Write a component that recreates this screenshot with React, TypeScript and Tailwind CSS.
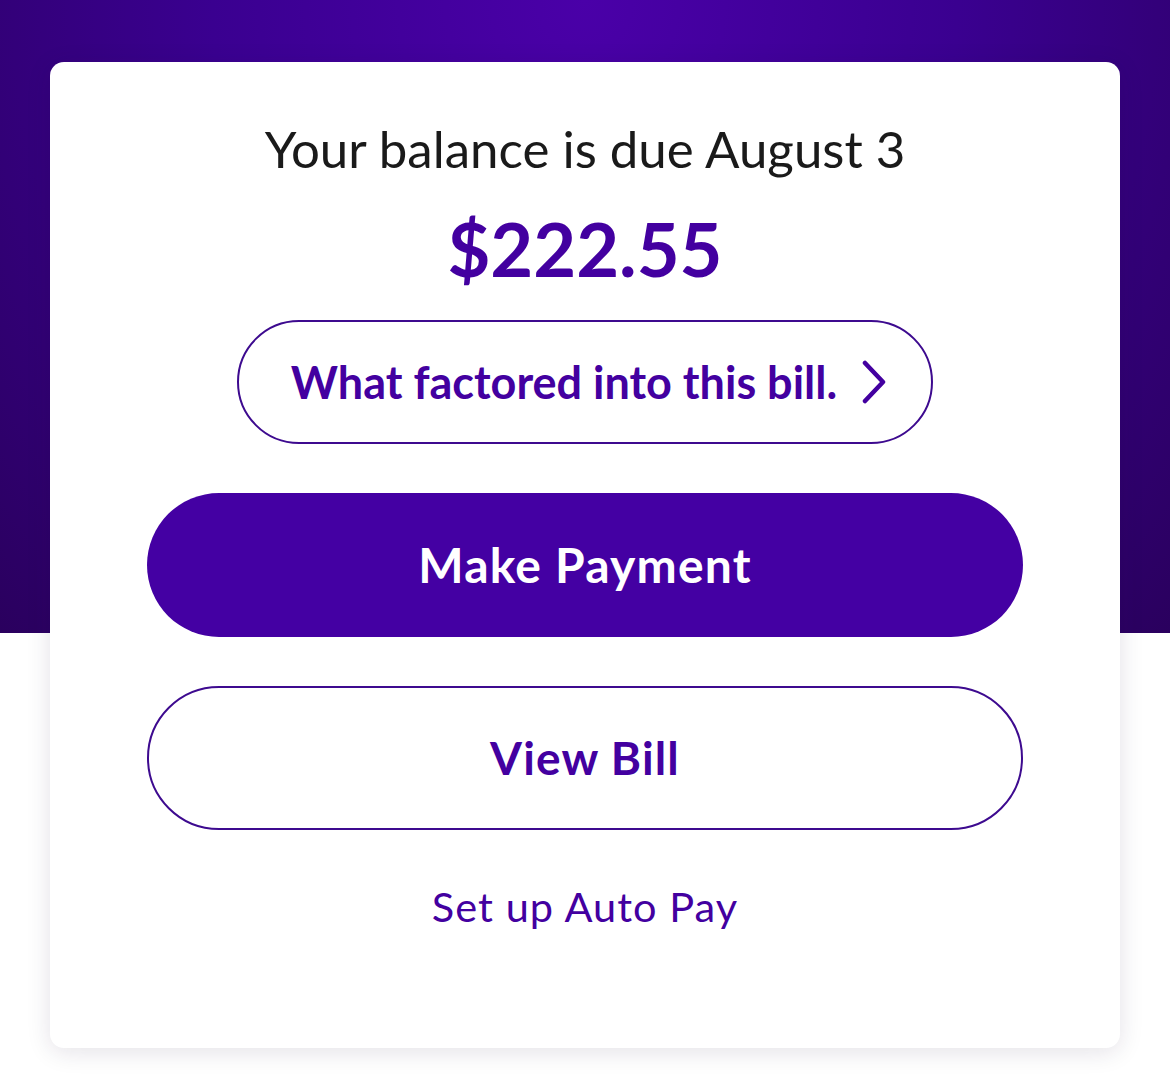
const purple = "text-[#4300a0]";

function Chevron() {
  return (
    <svg width="26" height="44" viewBox="0 0 26 44" fill="none" className="shrink-0">
      <path d="M4 3 L22 22 L4 41" stroke="#4300a0" strokeWidth="4.5" strokeLinecap="round" strokeLinejoin="round" />
    </svg>
  );
}

export default function App() {
  return (
    <div
      className="relative min-h-[1076px] w-full bg-white"
      style={{ fontFamily: "Lato, 'Open Sans', sans-serif" }}
    >
      <div className="absolute inset-x-0 top-0 h-[633px] bg-[radial-gradient(ellipse_at_50%_0%,#4a00a8_0%,#3a0090_45%,#2a005e_100%)]" />

      <div className="relative px-[50px] pt-[62px]">
        <div className="flex h-[986px] flex-col items-center rounded-[14px] bg-white pt-[61px] shadow-[0_4px_24px_rgba(30,20,60,0.12)]">
          <p className="text-[51px] leading-none text-[#1a1a1a]">
            Your balance is due August 3
          </p>

          <p className={`mt-[38px] text-[74px] font-bold leading-none ${purple}`}>
            $222.55
          </p>

          <button className="mt-[34px] flex h-[124px] w-[696px] items-center justify-center gap-[24px] rounded-full border-[2.5px] border-[#3d0a8f] bg-white pl-[8px]">
            <span className={`text-[45px] font-bold leading-none ${purple}`}>
              What factored into this bill.
            </span>
            <Chevron />
          </button>

          <button className="mt-[49px] flex h-[144px] w-[876px] items-center justify-center rounded-full bg-[#4400a3]">
            <span className="text-[48px] font-bold leading-none tracking-wide text-white">
              Make Payment
            </span>
          </button>

          <button className="mt-[49px] flex h-[144px] w-[876px] items-center justify-center rounded-full border-[2.5px] border-[#3d0a8f] bg-white">
            <span className={`text-[46px] font-bold leading-none tracking-wide ${purple}`}>
              View Bill
            </span>
          </button>

          <a className={`mt-[56px] text-[41.5px] leading-none tracking-wide ${purple}`}>
            Set up Auto Pay
          </a>
        </div>
      </div>
    </div>
  );
}
